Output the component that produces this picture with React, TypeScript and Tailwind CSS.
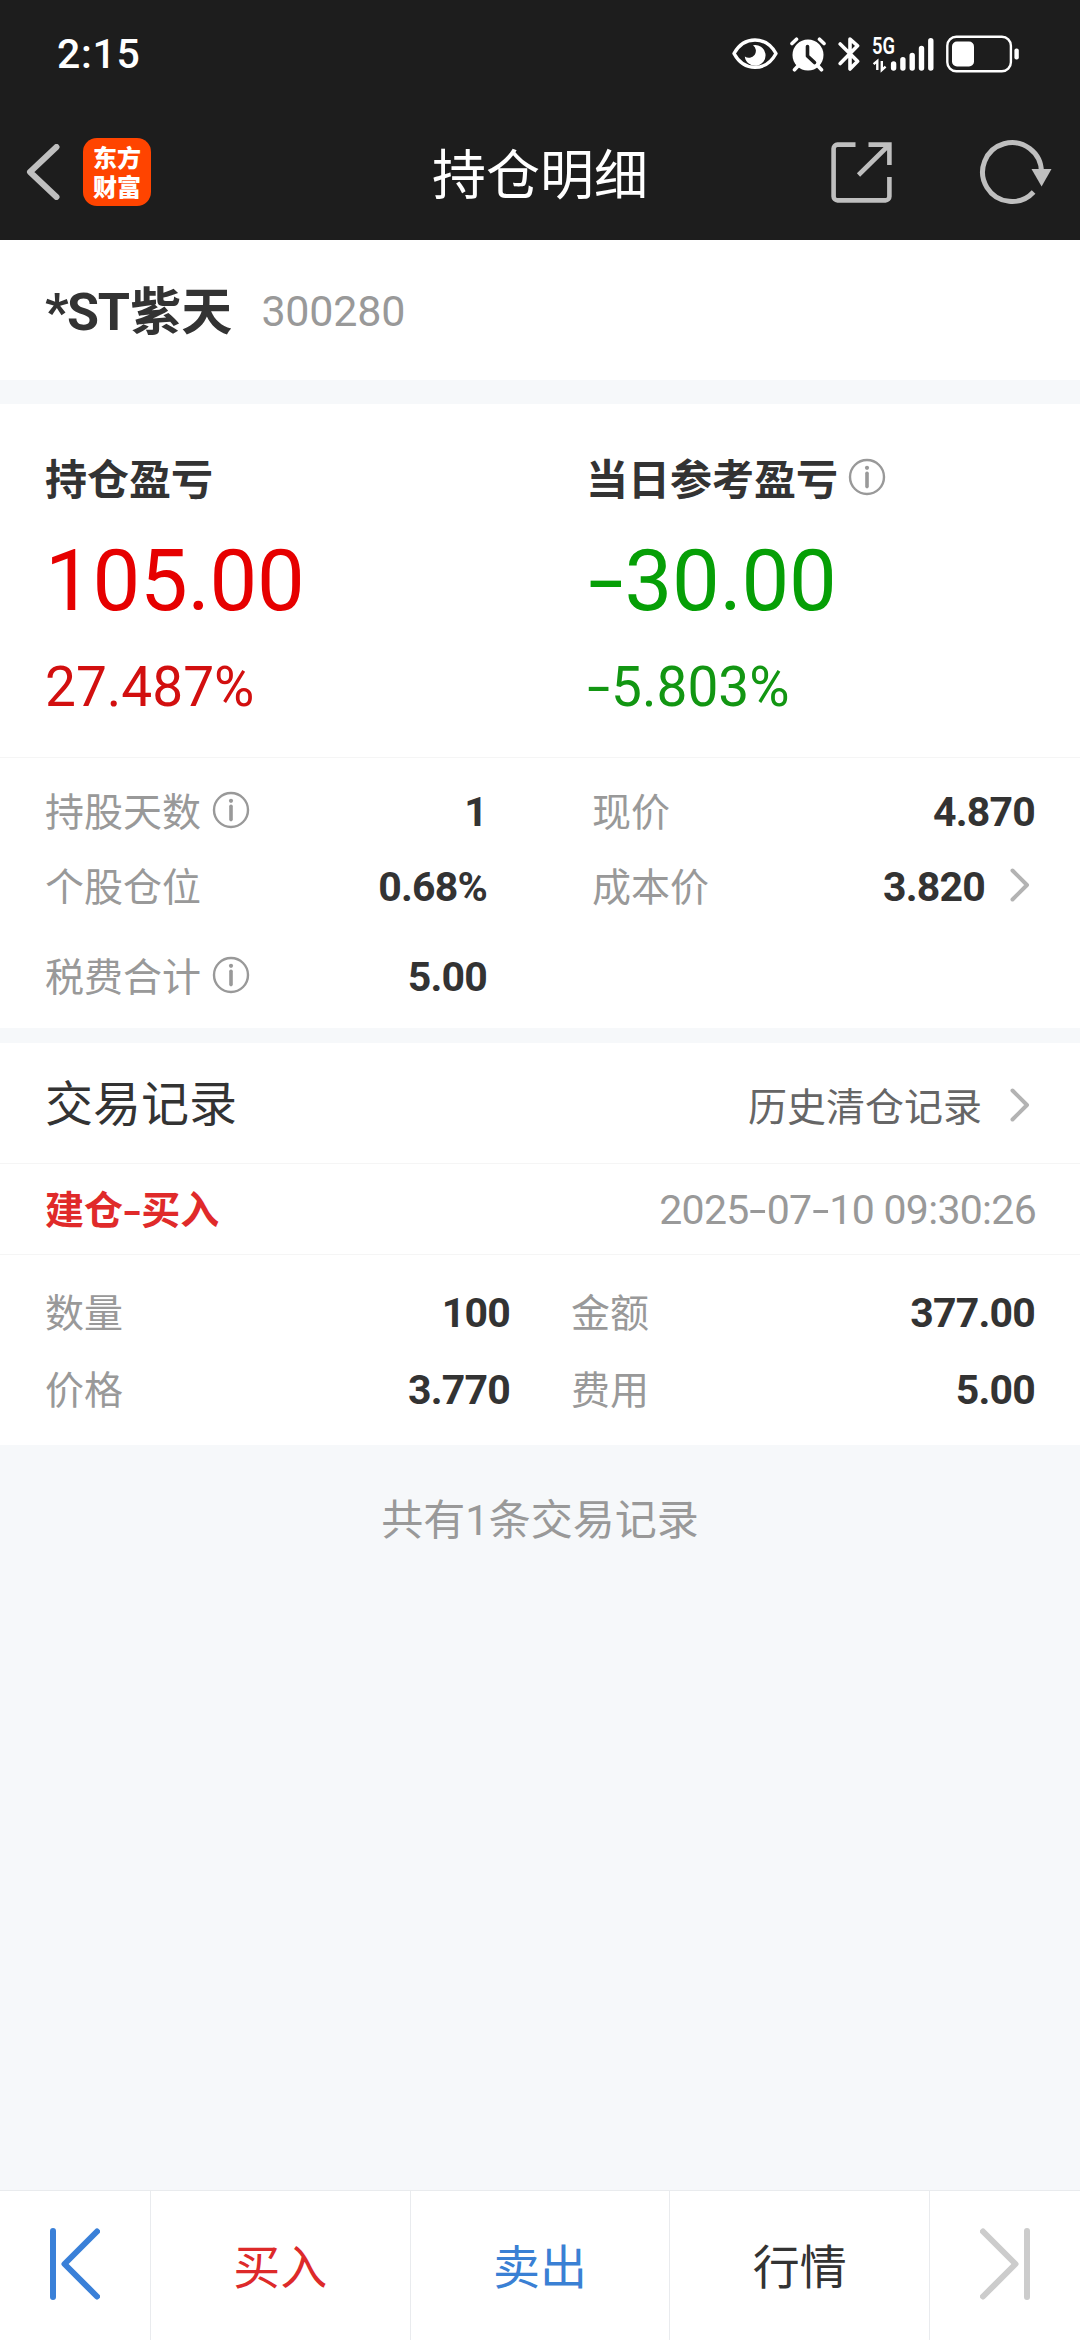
import React from 'react';

interface CellProps {
    label: string;
    value: string;
    info?: boolean;
    arrow?: boolean;
}

const InfoIcon: React.FC<{ className?: string }> = ({ className = '' }) => (
    <svg viewBox="0 0 38 38" className={`w-[38px] h-[38px] shrink-0 ${className}`} fill="none">
        <circle cx="19" cy="19" r="17" stroke="#999" strokeWidth="2.4" />
        <circle cx="19" cy="9.8" r="2.1" fill="#999" />
        <path d="M19 15.2V28.6" stroke="#999" strokeWidth="3.6" strokeLinecap="round" />
    </svg>
);

const ChevronRight: React.FC<{ className?: string }> = ({ className = '' }) => (
    <svg viewBox="0 0 20 34" className={`w-[20px] h-[34px] shrink-0 ${className}`} fill="none">
        <path d="M2.5 2.5L17 17L2.5 31.5" stroke="#b3b3b3" strokeWidth="4" strokeLinecap="round" strokeLinejoin="round" />
    </svg>
);

const StatusBar: React.FC = () => (
    <div className="flex h-[108px] items-center justify-between pl-[57px] pr-[61px] text-white">
        <span className="pt-[1px] font-['Roboto',sans-serif] text-[41px] leading-none font-medium tracking-[0.7px]">2:15</span>
        <div className="flex items-center">
            {/* eye comfort */}
            <svg viewBox="0 0 46 36" className="mr-[12px] h-[36px] w-[46px]" fill="none">
                <path d="M2 17.5C12 -0.5 34 -0.5 44 17.5C34 36 12 36 2 17.5Z" stroke="#fff" strokeWidth="3.4" strokeLinejoin="round" />
                <path d="M21 9.2A10.4 10.4 0 1 1 12.8 20.5A5.6 5.6 0 0 0 21 9.2Z" fill="#fff" />
            </svg>
            {/* alarm */}
            <svg viewBox="0 0 36 36" className="mr-[12px] h-[36px] w-[36px]" fill="none">
                <circle cx="18" cy="19" r="15.5" fill="#fff" />
                <path d="M2 7.5L6.5 3.2M34 7.5L29.5 3.2M8 30L4.5 33.8M28 30L31.5 33.8" stroke="#fff" strokeWidth="3.6" strokeLinecap="round" />
                <path d="M17.5 10.5V20L24.5 26.5" stroke="#1d1d1d" strokeWidth="3.6" strokeLinecap="round" strokeLinejoin="round" />
            </svg>
            {/* bluetooth */}
            <svg viewBox="0 0 22 36" className="mr-[12px] h-[36px] w-[22px]" fill="none">
                <path d="M2.2 8L19.6 25.2L12 33V3L19.6 9.8L2.2 27.5" stroke="#fff" strokeWidth="3.6" strokeLinecap="round" strokeLinejoin="round" />
            </svg>
            {/* 5G signal */}
            <svg viewBox="0 0 62 36" className="mr-[12px] h-[36px] w-[62px] overflow-visible" fill="none">
                <text x="0" y="18" textLength="23" lengthAdjust="spacingAndGlyphs" fontFamily="Roboto" fontWeight="600" fontSize="23" fill="#fff">5G</text>
                <path d="M5.3 34V25L1.6 28.2M9.8 25V34L13.6 30.6" stroke="#fff" strokeWidth="2.4" />
                <path d="M21.6 28V32M30.9 23.8V32M40.2 19.5V32M49.5 12.5V32M58.8 4.8V32" stroke="#fff" strokeWidth="5.4" strokeLinecap="round" />
            </svg>
            {/* battery */}
            <svg viewBox="0 0 73 38" className="h-[38px] w-[73px]" fill="none">
                <rect x="1.3" y="1.8" width="63.6" height="34.4" rx="9" stroke="#fff" strokeWidth="2.4" />
                <rect x="6" y="6.5" width="22" height="25" rx="5" fill="#fff" />
                <rect x="68.4" y="13.5" width="4.4" height="11" rx="2" fill="#fff" />
            </svg>
        </div>
    </div>
);

const NavHeader: React.FC = () => (
    <div className="flex h-[132px] items-center pb-[4px]">
        <div className="flex flex-1 items-center pl-[26px]">
            <svg viewBox="0 0 34 56" className="h-[56px] w-[34px]" fill="none">
                <path d="M30.5 3L4 28L30.5 53" stroke="#bfbfbf" strokeWidth="6" strokeLinecap="round" strokeLinejoin="round" />
            </svg>
            <div className="ml-[23px] flex h-[68px] w-[68px] items-center justify-center rounded-[14px] bg-[#ff4400] pb-[3px] text-[24px] leading-[29px] font-black text-white">
                <span className="w-[48px] break-all">东方财富</span>
            </div>
        </div>
        <span className="pl-[2px] text-[54px] leading-none text-white">持仓明细</span>
        <div className="flex flex-1 items-center justify-end pr-[28px]">
            <svg viewBox="0 0 61 61" className="mr-[87px] h-[61px] w-[61px]" fill="none" stroke="#bfbfbf" strokeWidth="4.6">
                <path d="M24.5 2.6H6.5A4 4 0 0 0 2.6 6.5V54.5A4 4 0 0 0 6.5 58.4H54.5A4 4 0 0 0 58.4 54.5V35" />
                <path d="M37.5 2.6H58.4V23M57.5 3.5L27.5 33" />
            </svg>
            <svg viewBox="0 0 73 66" className="h-[66px] w-[73px]" fill="none">
                <path d="M62.4 33A29.4 29.4 0 1 0 54.6 53" stroke="#bfbfbf" strokeWidth="5" />
                <path d="M52.5 30H72.5L62.6 47.5Z" fill="#bfbfbf" />
            </svg>
        </div>
    </div>
);

// wider than the default hyphen
const Dash: React.FC<{ className?: string }> = ({ className = 'mx-[0.09em] scale-x-[1.5]' }) => (
    <span className={`inline-block leading-none ${className}`}>-</span>
);

const StatCell: React.FC<CellProps> = ({ label, value, info, arrow }) => (
    <div className="flex h-full items-center text-[39px] leading-none">
        <span className="text-[#999]">{label}</span>
        {info && <InfoIcon className="ml-[11px]" />}
        <span className="mt-[6px] ml-auto font-['Roboto',sans-serif] text-[41px] font-bold tracking-[-0.8px] text-[#333]">{value}</span>
        {arrow && <ChevronRight className="mr-[5px] ml-[25px]" />}
    </div>
);

const profits = [
    { title: '持仓盈亏', amount: '105.00', rate: '27.487%', down: false },
    { title: '当日参考盈亏', amount: '30.00', rate: '5.803%', down: true },
];

const App: React.FC = () => {
    return (
        <div className="flex h-[2340px] w-[1080px] flex-col overflow-hidden bg-[#f6f8fa] font-['Noto_Sans_CJK_SC',sans-serif]">
            <header className="bg-[#1d1d1d]">
                <StatusBar />
                <NavHeader />
            </header>

            <section className="flex h-[140px] items-center bg-white pb-[4px] pl-[45px] leading-none">
                <span className="text-[51px] font-bold text-[#333]">
                    <span className="mr-[2px] font-['Roboto',sans-serif] text-[52px] leading-[0] tracking-[-1.5px]">*ST</span>紫天
                </span>
                <span className="mt-[7px] ml-[29px] font-['Roboto',sans-serif] text-[43px] tracking-[-0.2px] text-[#999]">300280</span>
            </section>

            {/* 盈亏 */}
            <section className="mt-[24px] grid h-[354px] grid-cols-[541px_1fr] border-b border-[#f5f5f5] bg-white pt-[43px] pl-[45px]">
                {profits.map((p) => (
                    <div key={p.title} className={p.down ? 'text-[#069f06]' : 'text-[#e60000]'}>
                        <div className="flex h-[60px] items-center text-[42px] leading-none font-bold text-[#333]">
                            {p.title}
                            {p.down && <InfoIcon className="ml-[10px]" />}
                        </div>
                        <div className="mt-[24px] flex h-[100px] items-center font-['Roboto',sans-serif] text-[85px] leading-none tracking-[-0.3px]">
                            {p.down && <Dash />}
                            {p.amount}
                        </div>
                        <div className={`mt-[26px] flex h-[60px] items-center font-['Roboto',sans-serif] text-[55px] leading-none ${p.down ? 'text-[#129612]' : 'text-[#d20f0f]'}`}>
                            {p.down && <Dash />}
                            {p.rate}
                        </div>
                    </div>
                ))}
            </section>

            <section className="grid h-[270px] grid-cols-[442px_1fr] grid-rows-[75px_75px_15px_75px] gap-x-[105px] bg-white pt-[14px] pr-[45px] pl-[45px]">
                <StatCell label="持股天数" value="1" info />
                <StatCell label="现价" value="4.870" />
                <StatCell label="个股仓位" value="0.68%" />
                <StatCell label="成本价" value="3.820" arrow />
                <div className="col-span-2" />
                <StatCell label="税费合计" value="5.00" info />
            </section>

            {/* 交易记录 */}
            <section className="mt-[15px] bg-white">
                <div className="flex h-[121px] items-center border-b border-[#f5f5f5] pr-[50px] pl-[45px] leading-none">
                    <span className="pb-[6px] text-[48px] text-[#333]">交易记录</span>
                    <span className="ml-auto pt-[2px] text-[39px] text-[#666]">历史清仓记录</span>
                    <ChevronRight className="mt-[4px] ml-[28px]" />
                </div>
                <div className="flex h-[91px] items-center justify-between border-b border-[#f5f5f5] pr-[44px] pb-[4px] pl-[45px] leading-none">
                    <span className="text-[39px] font-bold text-[#e02a2a]">
                        建仓<Dash className="mx-[0.05em] scale-x-[1.4]" />买入
                    </span>
                    <span className="mt-[7px] font-['Roboto',sans-serif] text-[41px] tracking-[-0.7px] text-[#999]">
                        2025<Dash />07<Dash />10 09:30:26
                    </span>
                </div>
                <div className="grid h-[190px] grid-cols-[465px_1fr] grid-rows-[77px_77px] gap-x-[61px] pt-[17px] pr-[45px] pl-[45px]">
                    <StatCell label="数量" value="100" />
                    <StatCell label="金额" value="377.00" />
                    <StatCell label="价格" value="3.770" />
                    <StatCell label="费用" value="5.00" />
                </div>
            </section>

            <p className="h-[144px] pt-[51px] text-center text-[42px] leading-none text-[#999]">
                共有<span className="font-['Roboto',sans-serif] leading-[0]">1</span>条交易记录
            </p>

            <nav className="mt-auto flex h-[150px] divide-x divide-[#e9ebee] border-t border-[#e9ebee] bg-white text-[47px] leading-none *:flex *:items-center *:justify-center *:pb-[4px]">
                <div className="w-[151px]">
                    <svg viewBox="0 0 50 72" className="h-[72px] w-[50px]" fill="none" stroke="#3a80d8" strokeWidth="6" strokeLinecap="round" strokeLinejoin="round">
                        <path d="M3 3V69M47 3.5L14.5 36L47 68.5" />
                    </svg>
                </div>
                <div className="flex-1 text-[#dd2a2a]">买入</div>
                <div className="flex-1 text-[#3a80d4]">卖出</div>
                <div className="flex-1 text-[#333]">行情</div>
                <div className="w-[150px]">
                    <svg viewBox="0 0 50 72" className="h-[72px] w-[50px]" fill="none" stroke="#ccc" strokeWidth="6" strokeLinecap="round" strokeLinejoin="round">
                        <path d="M47 3V69M3 3.5L35.5 36L3 68.5" />
                    </svg>
                </div>
            </nav>
        </div>
    );
};

export default App;
